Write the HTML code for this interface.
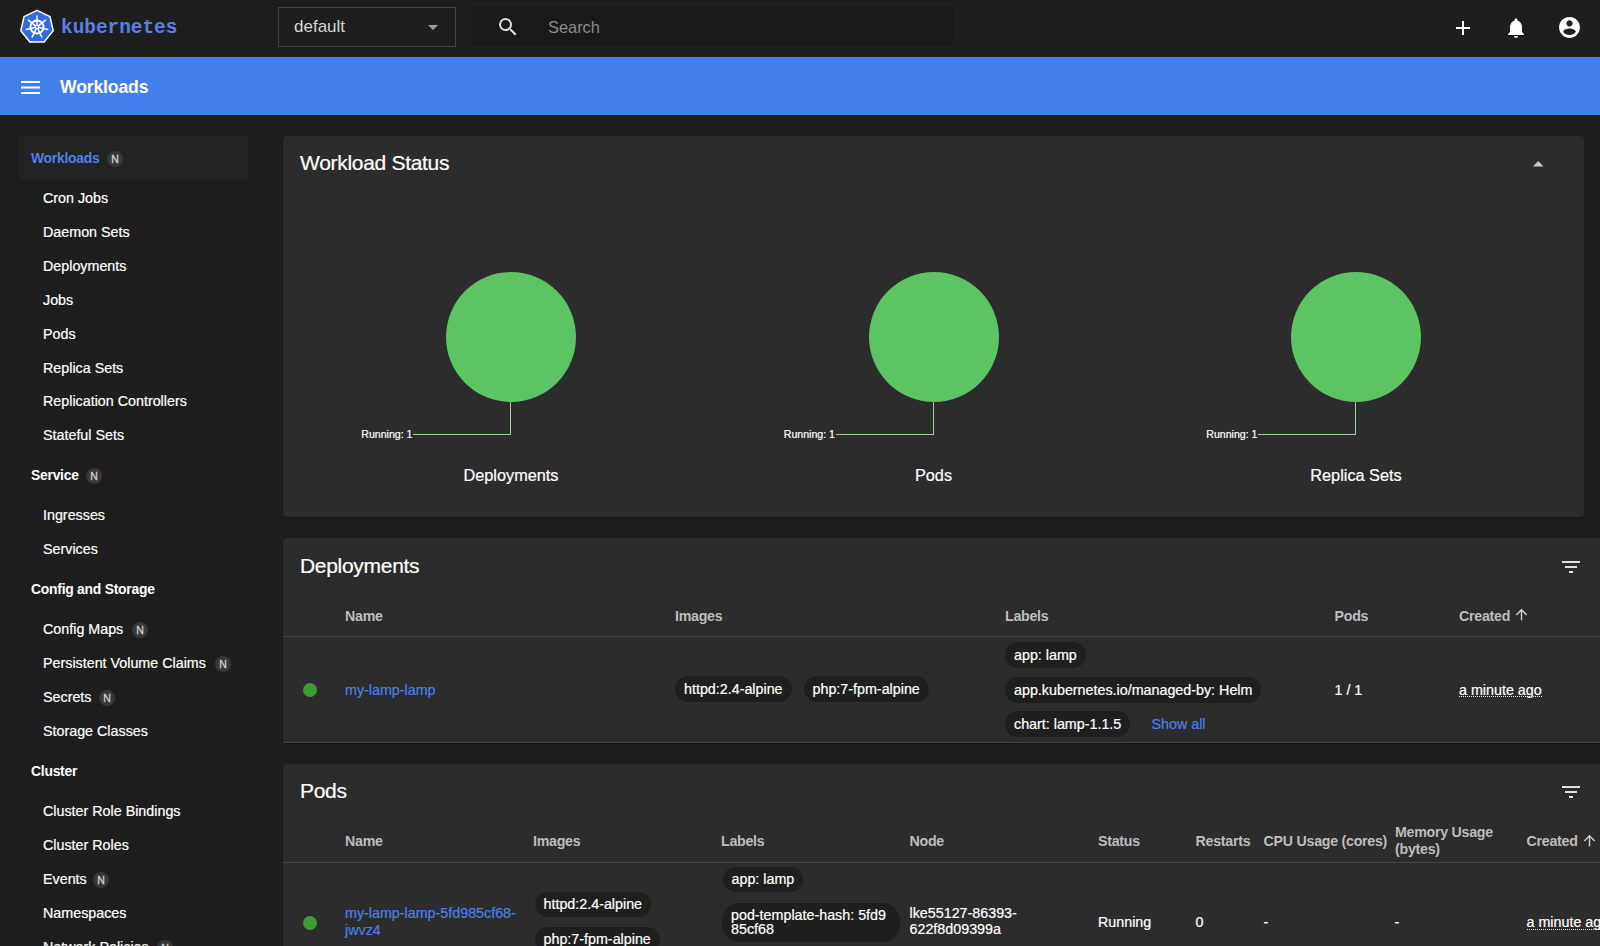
<!DOCTYPE html>
<html><head><meta charset="utf-8">
<style>
*{box-sizing:border-box;margin:0;padding:0}
html,body{width:1600px;height:946px;overflow:hidden;background:#1e1e1e;font-family:"Liberation Sans",sans-serif;color:#fff}
.a{position:absolute;white-space:nowrap}
#top{position:absolute;left:0;top:0;width:1600px;height:57px;background:#1e1e1e}
#bar{position:absolute;left:0;top:57px;width:1600px;height:58px;background:#427feb}
.si{position:absolute;left:43px;font-size:14.3px;line-height:20px;color:#fff}
.sh{position:absolute;left:31px;font-size:13.9px;letter-spacing:-0.25px;font-weight:bold;line-height:20px;color:#fff}
.nb{position:absolute;width:16px;height:16px;border-radius:50%;background:#383838;color:#d0d0d0;font-size:10.5px;font-weight:normal;-webkit-text-stroke:0.3px #d0d0d0;text-align:center;line-height:17px}
.card{position:absolute;background:#2c2c2c;border-radius:4px;box-shadow:0 1px 2px rgba(0,0,0,0.35)}
.th{position:absolute;white-space:nowrap;font-size:14.2px;letter-spacing:-0.25px;font-weight:bold;color:#bdbdbd;line-height:20px}
.td{position:absolute;white-space:nowrap;font-size:14.3px;color:#fff;line-height:20px}
.chip{position:absolute;height:26px;border-radius:13px;background:#1f1f1f;color:#fff;font-size:14.3px;line-height:26px;padding:0 9px;white-space:nowrap}
.link{color:#4c80e6}
.dot{position:absolute;width:14px;height:14px;border-radius:50%;background:#3e9b36}
.si,.td,.chip{-webkit-text-stroke:0.2px currentColor}
</style></head><body>
<div id="top">
  <svg class="a" style="left:20px;top:9px" width="35" height="36" viewBox="0 0 35 36">
    <polygon points="17.00,1.40 29.98,7.65 33.18,21.69 24.20,32.96 9.80,32.96 0.82,21.69 4.02,7.65" fill="#326ce5" stroke="#fff" stroke-width="1.5" stroke-linejoin="round"/>
    <g stroke="#fff" fill="none" stroke-linecap="round">
      <circle cx="17.0" cy="18.0" r="6.6" stroke-width="2"/>
      <g stroke-width="1.5"><line x1="17.00" y1="15.80" x2="17.00" y2="7.00"/><line x1="18.72" y1="16.63" x2="25.60" y2="11.14"/><line x1="19.14" y1="18.49" x2="27.72" y2="20.45"/><line x1="17.95" y1="19.98" x2="21.77" y2="27.91"/><line x1="16.05" y1="19.98" x2="12.23" y2="27.91"/><line x1="14.86" y1="18.49" x2="6.28" y2="20.45"/><line x1="15.28" y1="16.63" x2="8.40" y2="11.14"/></g>
      <circle cx="17.0" cy="18.0" r="1.6" stroke-width="1.2"/>
    </g>
  </svg>
  <div class="a" style="left:61px;top:17px;font-family:'Liberation Mono',monospace;font-weight:bold;font-size:19.4px;line-height:22px;color:#5a80e6">kubernetes</div>
  <div class="a" style="left:277.5px;top:6.5px;width:178px;height:40.5px;border:1px solid #454545"></div>
  <div class="a" style="left:294px;top:16px;font-size:17px;line-height:22px;color:#d6d6d6">default</div>
  <svg class="a" style="left:428px;top:25px" width="10" height="5"><polygon points="0,0 10,0 5,5" fill="#9e9e9e"/></svg>
  <div class="a" style="left:472px;top:6.5px;width:481px;height:39.5px;background:#191919"></div>
  <svg class="a" style="left:496px;top:15px" width="24" height="24" viewBox="0 0 24 24"><path fill="#e0e0e0" d="M15.5 14h-.79l-.28-.27A6.471 6.471 0 0 0 16 9.5 6.5 6.5 0 1 0 9.5 16c1.61 0 3.09-.59 4.23-1.57l.27.28v.79l5 4.99L20.49 19l-4.99-5zm-6 0C7.01 14 5 11.99 5 9.5S7.01 5 9.5 5 14 7.01 14 9.5 11.99 14 9.5 14z"/></svg>
  <div class="a" style="left:548px;top:16px;font-size:16.4px;line-height:22px;color:#8c8c8c">Search</div>
  <svg class="a" style="left:1450.5px;top:15.7px" width="24" height="24" viewBox="0 0 24 24"><path fill="#fff" d="M19 13h-6v6h-2v-6H5v-2h6V5h2v6h6v2z"/></svg>
  <svg class="a" style="left:1504px;top:16px" width="24" height="24" viewBox="0 0 24 24"><path fill="#fff" d="M12 22c1.1 0 2-.9 2-2h-4c0 1.1.89 2 2 2zm6-6v-5c0-3.07-1.64-5.64-4.5-6.32V4c0-.83-.67-1.5-1.5-1.5s-1.5.67-1.5 1.5v.68C7.63 5.36 6 7.92 6 11v5l-2 2v1h16v-1l-2-2z"/></svg>
  <svg class="a" style="left:1557px;top:15px" width="25" height="25" viewBox="0 0 24 24"><path fill="#fff" d="M12 2C6.48 2 2 6.48 2 12s4.48 10 10 10 10-4.48 10-10S17.52 2 12 2zm0 3c1.66 0 3 1.34 3 3s-1.34 3-3 3-3-1.34-3-3 1.34-3 3-3zm0 14.2c-2.5 0-4.71-1.28-6-3.22.03-1.99 4-3.08 6-3.08 1.99 0 5.97 1.09 6 3.08-1.29 1.94-3.5 3.22-6 3.22z"/></svg>
</div>
<div id="bar">
  <svg class="a" style="left:21px;top:24px" width="19" height="13"><rect x="0" y="0" width="19" height="2" fill="#fff"/><rect x="0" y="5.5" width="19" height="2" fill="#fff"/><rect x="0" y="11" width="19" height="2" fill="#fff"/></svg>
  <div class="a" style="left:60px;top:19px;font-size:17.6px;letter-spacing:-0.15px;font-weight:bold;line-height:22px;color:#fff">Workloads</div>
</div>

<!-- sidebar -->
<div class="a" style="left:19px;top:136px;width:229px;height:44px;background:#232323"></div>
<div class="sh" style="top:148px;color:#4c80e6">Workloads</div><div class="nb" style="left:107px;top:150.5px">N</div>
<div class="si" style="top:188px">Cron Jobs</div>
<div class="si" style="top:222px">Daemon Sets</div>
<div class="si" style="top:256px">Deployments</div>
<div class="si" style="top:290px">Jobs</div>
<div class="si" style="top:324px">Pods</div>
<div class="si" style="top:358px">Replica Sets</div>
<div class="si" style="top:391px">Replication Controllers</div>
<div class="si" style="top:425px">Stateful Sets</div>
<div class="sh" style="top:465px">Service</div><div class="nb" style="left:86px;top:467.5px">N</div>
<div class="si" style="top:505px">Ingresses</div>
<div class="si" style="top:539px">Services</div>
<div class="sh" style="top:579px">Config and Storage</div>
<div class="si" style="top:619px">Config Maps</div><div class="nb" style="left:132px;top:621.5px">N</div>
<div class="si" style="top:653px">Persistent Volume Claims</div><div class="nb" style="left:215px;top:655.5px">N</div>
<div class="si" style="top:687px">Secrets</div><div class="nb" style="left:99px;top:689.5px">N</div>
<div class="si" style="top:721px">Storage Classes</div>
<div class="sh" style="top:761px">Cluster</div>
<div class="si" style="top:801px">Cluster Role Bindings</div>
<div class="si" style="top:835px">Cluster Roles</div>
<div class="si" style="top:869px">Events</div><div class="nb" style="left:93px;top:871.5px">N</div>
<div class="si" style="top:903px">Namespaces</div>
<div class="si" style="top:937px">Network Policies</div><div class="nb" style="left:157px;top:939.5px">N</div>

<!-- Workload status -->
<div class="card" style="left:283px;top:136px;width:1301px;height:381px"></div>
<div class="a" style="left:300px;top:151px;font-size:21px;letter-spacing:-0.3px;line-height:24px;color:#fff;-webkit-text-stroke:0.2px #fff">Workload Status</div>
<svg class="a" style="left:1533px;top:161px" width="11" height="6"><polygon points="0,5.5 10.5,5.5 5.25,0" fill="#c8c8c8"/></svg>
<svg class="a" style="left:441px;top:267px" width="140" height="170"><circle cx="70" cy="70" r="65" fill="#5cc463"/><polyline points="69.5,167.5 69.5,135" fill="none" stroke="#a0cc9c" stroke-width="1"/></svg>
<svg class="a" style="left:413px;top:425px" width="98" height="20"><polyline points="0,9.5 98,9.5" stroke="#a0cc9c" stroke-width="1"/></svg>
<div class="a" style="left:282.5px;width:130px;text-align:right;top:425px;font-size:10.6px;line-height:18px;color:#fff;-webkit-text-stroke:0.2px #fff">Running: 1</div>
<div class="a" style="left:411px;width:200px;text-align:center;top:464px;font-size:16.3px;line-height:22px;color:#fff;-webkit-text-stroke:0.2px #fff">Deployments</div>
<svg class="a" style="left:863.5px;top:267px" width="140" height="170"><circle cx="70" cy="70" r="65" fill="#5cc463"/><polyline points="69.5,167.5 69.5,135" fill="none" stroke="#a0cc9c" stroke-width="1"/></svg>
<svg class="a" style="left:835.5px;top:425px" width="98" height="20"><polyline points="0,9.5 98,9.5" stroke="#a0cc9c" stroke-width="1"/></svg>
<div class="a" style="left:705.0px;width:130px;text-align:right;top:425px;font-size:10.6px;line-height:18px;color:#fff;-webkit-text-stroke:0.2px #fff">Running: 1</div>
<div class="a" style="left:833.5px;width:200px;text-align:center;top:464px;font-size:16.3px;line-height:22px;color:#fff;-webkit-text-stroke:0.2px #fff">Pods</div>
<svg class="a" style="left:1286px;top:267px" width="140" height="170"><circle cx="70" cy="70" r="65" fill="#5cc463"/><polyline points="69.5,167.5 69.5,135" fill="none" stroke="#a0cc9c" stroke-width="1"/></svg>
<svg class="a" style="left:1258px;top:425px" width="98" height="20"><polyline points="0,9.5 98,9.5" stroke="#a0cc9c" stroke-width="1"/></svg>
<div class="a" style="left:1127.5px;width:130px;text-align:right;top:425px;font-size:10.6px;line-height:18px;color:#fff;-webkit-text-stroke:0.2px #fff">Running: 1</div>
<div class="a" style="left:1256px;width:200px;text-align:center;top:464px;font-size:16.3px;line-height:22px;color:#fff;-webkit-text-stroke:0.2px #fff">Replica Sets</div>
<div class="card" style="left:283px;top:538px;width:1340px;height:205px;border-radius:4px 0 0 4px"></div>
<div class="a" style="left:300px;top:554px;font-size:21px;letter-spacing:-0.3px;line-height:24px;color:#fff;-webkit-text-stroke:0.2px #fff">Deployments</div>
<svg class="a" style="left:1559px;top:555px" width="24" height="24" viewBox="0 0 24 24"><path fill="#e0e0e0" d="M10 18h4v-2h-4v2zM3 6v2h18V6H3zm3 7h12v-2H6v2z"/></svg>
<div class="th" style="left:345px;top:606px">Name</div>
<div class="th" style="left:675px;top:606px">Images</div>
<div class="th" style="left:1005px;top:606px">Labels</div>
<div class="th" style="left:1334.5px;top:606px">Pods</div>
<div class="th" style="left:1459px;top:606px">Created</div>
<svg class="a" style="left:1512.8px;top:606.2px" width="17" height="17" viewBox="0 0 24 24"><path fill="#d0d0d0" d="M4 12l1.41 1.41L11 7.83V20h2V7.83l5.58 5.59L20 12l-8-8-8 8z"/></svg>
<div class="a" style="left:283px;top:636px;width:1317px;height:1px;background:#474747"></div>
<div class="dot" style="left:303px;top:683px"></div>
<div class="td link" style="left:345px;top:680px">my-lamp-lamp</div>
<div class="chip" style="left:675px;top:676px">httpd:2.4-alpine</div>
<div class="chip" style="left:803.5px;top:676px">php:7-fpm-alpine</div>
<div class="chip" style="left:1005px;top:642px">app: lamp</div>
<div class="chip" style="left:1005px;top:677px">app.kubernetes.io/managed-by: Helm</div>
<div class="chip" style="left:1005px;top:711px">chart: lamp-1.1.5</div>
<div class="td link" style="left:1151.5px;top:714px">Show all</div>
<div class="td " style="left:1334.5px;top:680px">1 / 1</div>
<div class="td " style="left:1459px;top:680px">a minute ago</div><div class="a" style="left:1459px;top:696px;width:83px;height:1px;border-top:1px dotted #e8e8e8"></div>
<div class="a" style="left:283px;top:742px;width:1317px;height:1px;background:#444"></div>
<div class="card" style="left:283px;top:764px;width:1340px;height:300px;border-radius:4px 0 0 4px"></div>
<div class="a" style="left:300px;top:779px;font-size:21px;letter-spacing:-0.3px;line-height:24px;color:#fff;-webkit-text-stroke:0.2px #fff">Pods</div>
<svg class="a" style="left:1559px;top:780px" width="24" height="24" viewBox="0 0 24 24"><path fill="#e0e0e0" d="M10 18h4v-2h-4v2zM3 6v2h18V6H3zm3 7h12v-2H6v2z"/></svg>
<div class="th" style="left:345px;top:831px">Name</div>
<div class="th" style="left:533px;top:831px">Images</div>
<div class="th" style="left:721px;top:831px">Labels</div>
<div class="th" style="left:909.5px;top:831px">Node</div>
<div class="th" style="left:1098px;top:831px">Status</div>
<div class="th" style="left:1195.5px;top:831px">Restarts</div>
<div class="th" style="left:1263.6px;top:831px">CPU Usage (cores)</div>
<div class="th" style="left:1526.5px;top:831px">Created</div>
<div class="th" style="left:1395px;top:824px;line-height:17px">Memory Usage<br>(bytes)</div>
<svg class="a" style="left:1581.3px;top:831.8px" width="17" height="17" viewBox="0 0 24 24"><path fill="#d0d0d0" d="M4 12l1.41 1.41L11 7.83V20h2V7.83l5.58 5.59L20 12l-8-8-8 8z"/></svg>
<div class="a" style="left:283px;top:862px;width:1317px;height:1px;background:#474747"></div>
<div class="dot" style="left:302.5px;top:915.5px"></div>
<div class="td link" style="left:345px;top:905px;line-height:17px">my-lamp-lamp-5fd985cf68-<br>jwvz4</div>
<div class="chip" style="left:534.5px;top:891.5px;height:25px;line-height:25px">httpd:2.4-alpine</div>
<div class="chip" style="left:534.5px;top:926.5px;height:25px;line-height:25px">php:7-fpm-alpine</div>
<div class="chip" style="left:722.5px;top:867px;height:25px;line-height:25px">app: lamp</div>
<div class="chip" style="left:722px;top:902.5px;width:178px;height:39px;border-radius:18px;line-height:14px;padding-top:5px">pod-template-hash: 5fd9<br>85cf68</div>
<div class="td" style="left:909.5px;top:904.5px;line-height:16.5px">lke55127-86393-<br>622f8d09399a</div>
<div class="td " style="left:1098px;top:912px">Running</div>
<div class="td " style="left:1195.5px;top:912px">0</div>
<div class="td " style="left:1263.6px;top:912px">-</div>
<div class="td " style="left:1394.6px;top:912px">-</div>
<div class="td " style="left:1526.5px;top:912px">a minute ago</div><div class="a" style="left:1526.5px;top:928.5px;width:83px;height:1px;border-top:1px dotted #e8e8e8"></div>
</body></html>
